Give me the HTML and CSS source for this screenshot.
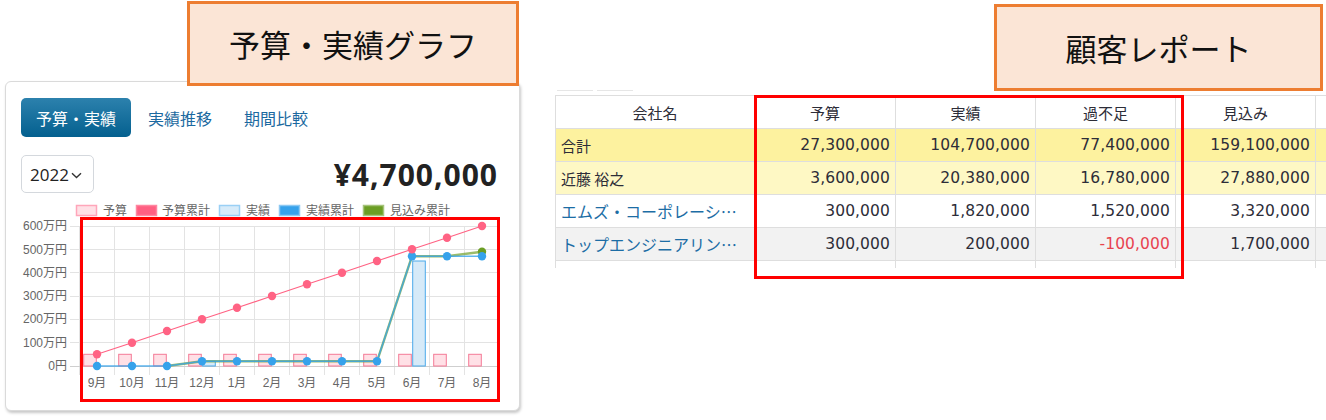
FILE: index.html
```html
<!DOCTYPE html>
<html lang="ja">
<head>
<meta charset="utf-8">
<title>予算・実績グラフ / 顧客レポート</title>
<link rel="stylesheet" href="styles.css">
</head>
<body>
  <section class="card">
    <div class="tabs">
      <div class="tab active">予算・実績</div>
      <div class="tab">実績推移</div>
      <div class="tab">期間比較</div>
    </div>
    <div class="toolbar">
      <div class="year">2022<svg class="chev" width="11" height="7" viewBox="0 0 11 7"><path d="M1 1.2 L5.5 5.5 L10 1.2" fill="none" stroke="#333" stroke-width="1.4"/></svg></div>
      <div class="amount">¥4,700,000</div>
    </div>
    <svg class="chart" width="483" height="208" viewBox="0 0 483 208">
      <g class="legend">
        <rect x="55.5" y="7.5" width="20" height="10" fill="#ffe0e6" stroke="#ffa6ba" stroke-width="1.5"/>
        <text x="82" y="17">予算</text>
        <rect x="115.5" y="7.5" width="20" height="10" fill="#ff5f82" stroke="#ff86a0" stroke-width="1.5"/>
        <text x="141" y="17">予算累計</text>
        <rect x="198.5" y="7.5" width="20" height="10" fill="#d7ebf9" stroke="#9ad0f5" stroke-width="1.5"/>
        <text x="225" y="17">実績</text>
        <rect x="258.5" y="7.5" width="20" height="10" fill="#36a2eb" stroke="#8cc8f2" stroke-width="1.5"/>
        <text x="285" y="17">実績累計</text>
        <rect x="342.5" y="7.5" width="20" height="10" fill="#6b9e24" stroke="#a5c37a" stroke-width="1.5"/>
        <text x="369" y="17">見込み累計</text>
      </g>
      <g class="grid" stroke="#e3e3e3" stroke-width="1">
        <line x1="49" y1="28.5" x2="478.5" y2="28.5"/>
        <line x1="49" y1="51.5" x2="478.5" y2="51.5"/>
        <line x1="49" y1="74.5" x2="478.5" y2="74.5"/>
        <line x1="49" y1="98.5" x2="478.5" y2="98.5"/>
        <line x1="49" y1="121.5" x2="478.5" y2="121.5"/>
        <line x1="49" y1="144.5" x2="478.5" y2="144.5"/>
        <line x1="58.5" y1="28" x2="58.5" y2="177"/>
        <line x1="93.5" y1="28" x2="93.5" y2="177"/>
        <line x1="128.5" y1="28" x2="128.5" y2="177"/>
        <line x1="163.5" y1="28" x2="163.5" y2="177"/>
        <line x1="198.5" y1="28" x2="198.5" y2="177"/>
        <line x1="233.5" y1="28" x2="233.5" y2="177"/>
        <line x1="268.5" y1="28" x2="268.5" y2="177"/>
        <line x1="303.5" y1="28" x2="303.5" y2="177"/>
        <line x1="338.5" y1="28" x2="338.5" y2="177"/>
        <line x1="373.5" y1="28" x2="373.5" y2="177"/>
        <line x1="408.5" y1="28" x2="408.5" y2="177"/>
        <line x1="443.5" y1="28" x2="443.5" y2="177"/>
        <line x1="478.5" y1="28" x2="478.5" y2="177"/>
      </g>
      <line x1="49" y1="168.5" x2="478.5" y2="168.5" stroke="#cfcfcf" stroke-width="1"/>
      <g class="ylabels">
        <text x="46" y="32">600万円</text>
        <text x="46" y="55.5">500万円</text>
        <text x="46" y="78.7">400万円</text>
        <text x="46" y="102">300万円</text>
        <text x="46" y="125.3">200万円</text>
        <text x="46" y="148.7">100万円</text>
        <text x="46" y="172">0円</text>
      </g>
      <g class="xlabels">
        <text x="76" y="189">9月</text>
        <text x="111" y="189">10月</text>
        <text x="146" y="189">11月</text>
        <text x="181" y="189">12月</text>
        <text x="216" y="189">1月</text>
        <text x="251" y="189">2月</text>
        <text x="286" y="189">3月</text>
        <text x="321" y="189">4月</text>
        <text x="356" y="189">5月</text>
        <text x="391" y="189">6月</text>
        <text x="426" y="189">7月</text>
        <text x="461" y="189">8月</text>
      </g>
      <g class="bars-budget" fill="#ffe0e6" stroke="#f47a96" stroke-width="1">
        <rect x="62.7" y="156.3" width="12.6" height="11.7"/>
        <rect x="97.7" y="156.3" width="12.6" height="11.7"/>
        <rect x="132.7" y="156.3" width="12.6" height="11.7"/>
        <rect x="167.7" y="156.3" width="12.6" height="11.7"/>
        <rect x="202.7" y="156.3" width="12.6" height="11.7"/>
        <rect x="237.7" y="156.3" width="12.6" height="11.7"/>
        <rect x="272.7" y="156.3" width="12.6" height="11.7"/>
        <rect x="307.7" y="156.3" width="12.6" height="11.7"/>
        <rect x="342.7" y="156.3" width="12.6" height="11.7"/>
        <rect x="377.7" y="156.3" width="12.6" height="11.7"/>
        <rect x="412.7" y="156.3" width="12.6" height="11.7"/>
        <rect x="447.7" y="156.3" width="12.6" height="11.7"/>
      </g>
      <g class="bars-actual" fill="#d6eaf8" stroke="#4aa9ea" stroke-width="1">
        <rect x="181.7" y="163.3" width="12.6" height="4.7"/>
        <rect x="391.7" y="63" width="12.6" height="105"/>
      </g>
      <polyline points="146,168 181,163.3 216,163.3 251,163.3 286,163.3 321,163.3 356,163.3 391,58.3 426,58.3 461,53.7" fill="none" stroke="#7aa63a" stroke-width="2.4" stroke-opacity="0.75"/>
      <g fill="#6b9e24"><circle cx="461" cy="53.7" r="4.2"/></g>
      <polyline points="76,168 111,168 146,168 181,163.3 216,163.3 251,163.3 286,163.3 321,163.3 356,163.3 391,58.3 426,58.3 461,58.3" fill="none" stroke="#36a2eb" stroke-width="1.5" stroke-opacity="0.8"/>
      <g fill="#36a2eb">
        <circle cx="76" cy="168" r="4.2"/>
        <circle cx="111" cy="168" r="4.2"/>
        <circle cx="146" cy="168" r="4.2"/>
        <circle cx="181" cy="163.3" r="4.2"/>
        <circle cx="216" cy="163.3" r="4.2"/>
        <circle cx="251" cy="163.3" r="4.2"/>
        <circle cx="286" cy="163.3" r="4.2"/>
        <circle cx="321" cy="163.3" r="4.2"/>
        <circle cx="356" cy="163.3" r="4.2"/>
        <circle cx="391" cy="58.3" r="4.2"/>
        <circle cx="426" cy="58.3" r="4.2"/>
        <circle cx="461" cy="58.3" r="4.2"/>
      </g>
      <polyline points="76,156.3 111,144.7 146,133 181,121.3 216,109.7 251,98 286,86.3 321,74.7 356,63 391,51.3 426,39.7 461,28" fill="none" stroke="#ff6384" stroke-width="1.2"/>
      <g fill="#ff6384">
        <circle cx="76" cy="156.3" r="4.2"/>
        <circle cx="111" cy="144.7" r="4.2"/>
        <circle cx="146" cy="133" r="4.2"/>
        <circle cx="181" cy="121.3" r="4.2"/>
        <circle cx="216" cy="109.7" r="4.2"/>
        <circle cx="251" cy="98" r="4.2"/>
        <circle cx="286" cy="86.3" r="4.2"/>
        <circle cx="321" cy="74.7" r="4.2"/>
        <circle cx="356" cy="63" r="4.2"/>
        <circle cx="391" cy="51.3" r="4.2"/>
        <circle cx="426" cy="39.7" r="4.2"/>
        <circle cx="461" cy="28" r="4.2"/>
      </g>
    </svg>
  </section>

  <section class="report">
    <div class="report-tabs"><span></span><span></span></div>
    <div class="grid-wrap">
      <table>
        <colgroup>
          <col class="c-name"><col class="c-num"><col class="c-num2"><col class="c-num2"><col class="c-num2"><col class="c-rest">
        </colgroup>
        <thead>
          <tr><th>会社名</th><th>予算</th><th>実績</th><th>過不足</th><th>見込み</th><th></th></tr>
        </thead>
        <tbody>
          <tr class="total"><td class="name">合計</td><td class="num">27,300,000</td><td class="num">104,700,000</td><td class="num">77,400,000</td><td class="num">159,100,000</td><td></td></tr>
          <tr class="person"><td class="name">近藤 裕之</td><td class="num">3,600,000</td><td class="num">20,380,000</td><td class="num">16,780,000</td><td class="num">27,880,000</td><td></td></tr>
          <tr class="plain"><td class="name link">エムズ・コーポレーシ…</td><td class="num">300,000</td><td class="num">1,820,000</td><td class="num">1,520,000</td><td class="num">3,320,000</td><td></td></tr>
          <tr class="alt"><td class="name link">トップエンジニアリン…</td><td class="num">300,000</td><td class="num">200,000</td><td class="num neg">-100,000</td><td class="num">1,700,000</td><td></td></tr>
          <tr class="plain"><td class="name"></td><td></td><td></td><td></td><td></td><td></td></tr>
        </tbody>
      </table>
    </div>
  </section>

  <div class="note note-graph">予算・実績グラフ</div>
  <div class="note note-report">顧客レポート</div>
  <div class="hl hl-chart"></div>
  <div class="hl hl-table"></div>
</body>
</html>
```
FILE: styles.css
```css
html, body {
  margin: 0;
  overflow: hidden;
}
body {
  width: 1326px;
  height: 420px;
  position: relative;
  background: #fff;
  font-family: "Noto Sans CJK JP", "Noto Sans", sans-serif;
  display: flex;
  align-items: flex-start;
}

/* chart card */
.card {
  margin: 81px 0 0 5px;
  width: 515px;
  box-sizing: border-box;
  border: 1px solid #dadada;
  border-radius: 6px;
  box-shadow: 1px 2px 3px rgba(0, 0, 0, 0.22);
  padding: 16px 15px 4px;
  background: #fff;
}
.tabs {
  display: flex;
  gap: 2px;
  height: 39px;
}
.tab {
  padding: 0 15px;
  display: flex;
  align-items: center;
  font-size: 16px;
  color: #1b69a0;
}
.tab.active {
  width: 110px;
  box-sizing: border-box;
  justify-content: center;
  color: #fff;
  border-radius: 5px;
  background: linear-gradient(#2c81ad, #04608f);
}
.toolbar {
  display: flex;
  justify-content: space-between;
  align-items: center;
  margin-top: 18px;
  height: 38px;
}
.year {
  box-sizing: border-box;
  width: 73px;
  height: 38px;
  border: 1px solid #d4d8dd;
  border-radius: 5px;
  display: flex;
  align-items: center;
  gap: 2px;
  padding-left: 8px;
  font-family: "Open Sans", sans-serif;
  font-size: 17px;
  color: #222;
}
.chev {
  margin-top: 2px;
}
.amount {
  font-family: "Open Sans", sans-serif;
  font-weight: 700;
  font-size: 30px;
  letter-spacing: 1px;
  color: #222;
  margin-right: 6px;
}
.chart {
  display: block;
  margin-top: 5px;
}
.chart text {
  font-family: "Liberation Sans", "Noto Sans CJK JP", sans-serif;
  font-size: 12px;
  fill: #666;
}
.chart .ylabels text {
  text-anchor: end;
}
.chart .xlabels text {
  text-anchor: middle;
}

/* report table */
.report {
  margin: 87px 0 0 35px;
  width: 771px;
  overflow: hidden;
}
.report-tabs {
  display: flex;
  gap: 4px;
  padding-left: 2px;
}
.report-tabs span {
  width: 36px;
  height: 3px;
  border-bottom: 1px solid #e6e6e6;
}
.grid-wrap {
  margin-top: 4px;
  height: 173px;
  overflow: hidden;
}
table {
  border-collapse: collapse;
  table-layout: fixed;
  width: 820px;
  font-size: 15px;
  color: #2d2d38;
}
.c-name { width: 199px; }
.c-num { width: 141px; }
.c-num2 { width: 140px; }
.c-rest { width: 60px; }
th, td {
  border: 1px solid #dedede;
  height: 32px;
  padding: 0 5px;
  white-space: nowrap;
  overflow: hidden;
}
th {
  font-weight: 400;
  text-align: center;
  background: #fff;
}
td.num {
  text-align: right;
  font-family: "DejaVu Sans", sans-serif;
  font-size: 15.5px;
  letter-spacing: 0.1px;
}
td.neg {
  color: #e8434f;
}
td.link {
  color: #1c6da5;
  font-size: 16px;
}
tr.total td { background: #fdf29f; }
tr.person td { background: #fef8c4; }
tr.plain td { background: #fff; }
tr.alt td { background: #f2f2f2; }

/* annotation overlays */
.note {
  position: absolute;
  box-sizing: border-box;
  border: 3px solid #ed7d31;
  background: #fbe5d6;
  display: flex;
  align-items: center;
  justify-content: center;
  font-size: 31px;
  color: #111;
}
.note-graph {
  left: 187px;
  top: 1px;
  width: 332px;
  height: 85px;
}
.note-report {
  left: 994px;
  top: 4px;
  width: 329px;
  height: 87px;
}
.hl {
  position: absolute;
  box-sizing: border-box;
  border: 3px solid #ff0000;
}
.hl-chart {
  left: 80px;
  top: 217px;
  width: 420px;
  height: 185px;
}
.hl-table {
  left: 754px;
  top: 95px;
  width: 430px;
  height: 184px;
}
```
